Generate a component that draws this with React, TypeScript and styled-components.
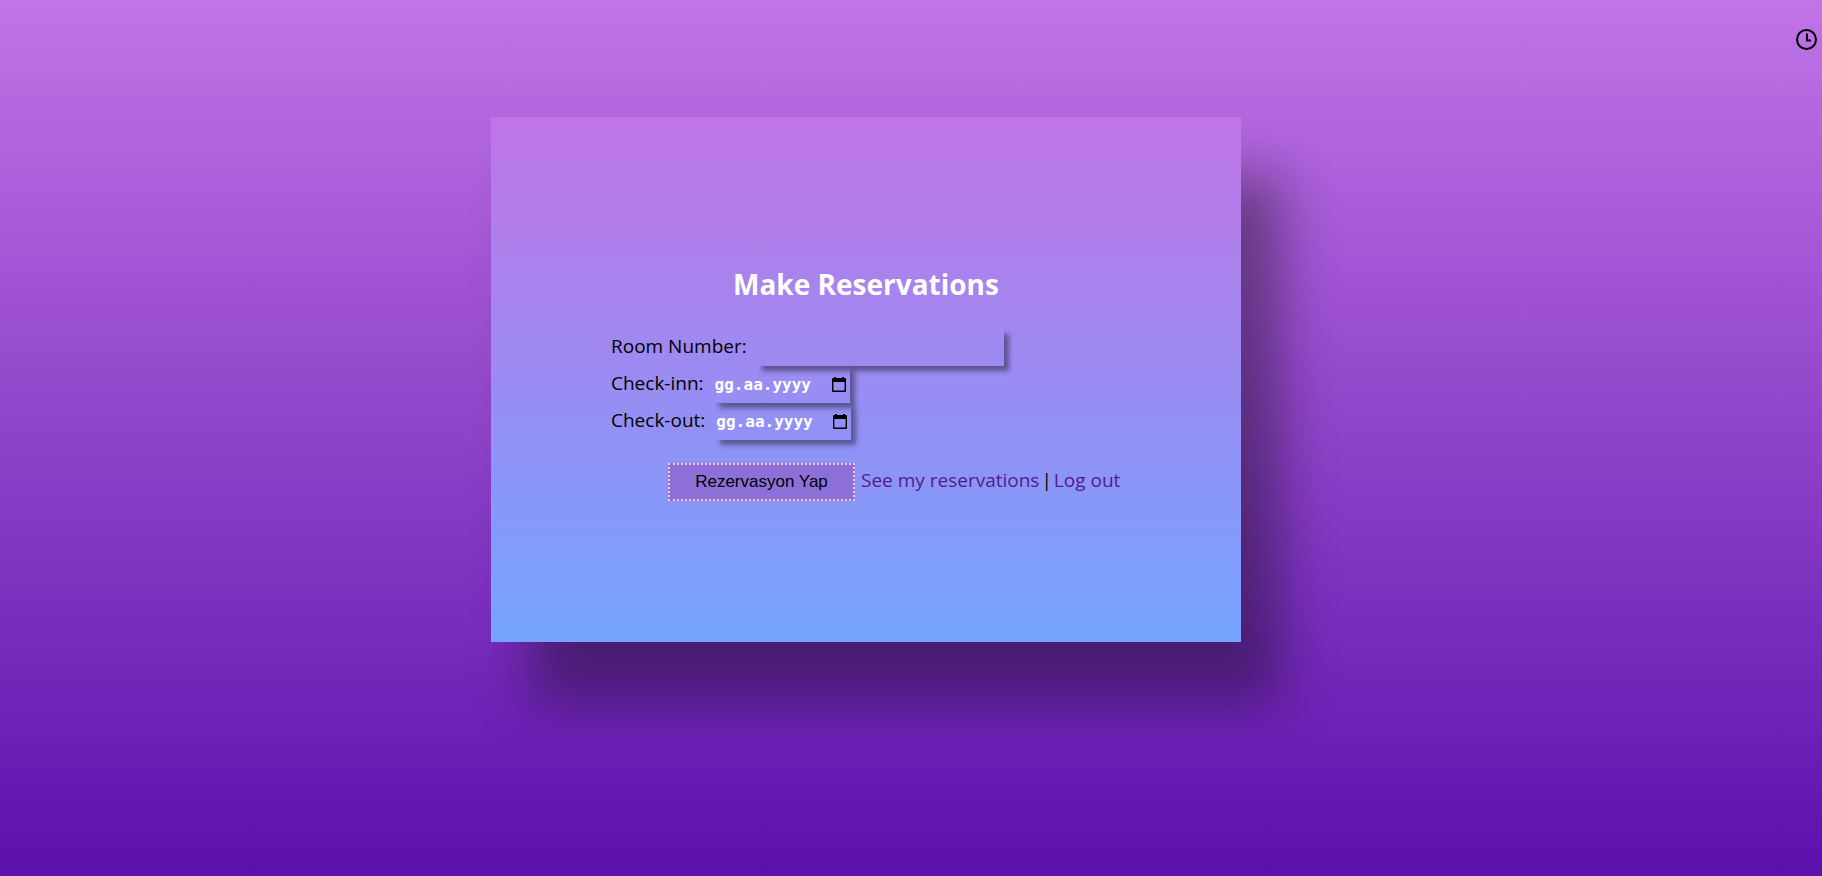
import React from "react";
import styled, { createGlobalStyle } from "styled-components";

const GlobalStyle = createGlobalStyle`
  * { box-sizing: border-box; }
  body {
    margin: 0;
    font-family: "Segoe UI", "Open Sans", "Noto Sans", sans-serif;
    font-size: 19px;
    line-height: 26px;
    color: #000;
  }
`;

const Page = styled.div`
  min-height: 100vh;
  display: flex;
  flex-direction: column;
  background: linear-gradient(#c074e6, #5c10ac);
`;

const TopBar = styled.header`
  display: flex;
  justify-content: flex-end;
  padding: 27px 3px 65px;
`;

const ClockButton = styled.button`
  display: flex;
  padding: 0;
  border: 0;
  background: none;
  color: #000;
`;

const Main = styled.main`
  display: flex;
  justify-content: center;
  padding: 0 90px 0 0;
`;

const Card = styled.section`
  width: 100%;
  max-width: 750px;
  padding: 149px 120px 141px;
  background: linear-gradient(#c074e6, #74a4ff);
  box-shadow: 40px 60px 50px rgba(10, 10, 10, 0.4);
`;

const Title = styled.h1`
  margin: 0 0 27px;
  font-size: 28px;
  line-height: 36px;
  text-align: center;
  color: #fff;
`;

const Field = styled.div`
  display: flex;
  align-items: flex-start;
  gap: 10px;
  height: 37px;
`;

const FieldLabel = styled.label`
  padding-top: 4px;
`;

const Box = styled.div<{ $width: number }>`
  display: flex;
  align-items: center;
  width: ${(p) => p.$width}px;
  height: 37px;
  box-shadow: 5px 5px 5px rgba(0, 0, 0, 0.4);
`;

const TextInput = styled.input`
  flex: 1;
  min-width: 0;
  height: 100%;
  padding: 0 1px;
  border: 0;
  outline: 0;
  background: transparent;
  color: #fff;
  font: bold 16px "DejaVu Sans Mono", monospace;

  &::placeholder {
    color: #fff;
    opacity: 1;
  }
`;

const PickerButton = styled.button`
  display: flex;
  padding: 0 3px 0 0;
  border: 0;
  background: none;
  color: #000;
`;

const Actions = styled.div`
  display: flex;
  align-items: flex-start;
  gap: 6px;
  margin: 23px 0 0 57px;
  white-space: nowrap;
`;

const SubmitButton = styled.button`
  flex: none;
  width: 187px;
  height: 38px;
  padding: 0;
  border: 2px dotted #ffc9d4;
  background: #8c70d8;
  color: #000;
  font: 17px "Liberation Sans", Arial, sans-serif;
`;

const Links = styled.nav`
  display: flex;
  gap: 2px;
  padding-top: 4px;
`;

const NavLink = styled.a`
  color: #551a8b;
  text-decoration: none;
`;

function ClockIcon() {
  return (
    <svg width="25" height="25" viewBox="0 0 25 25" fill="none" stroke="currentColor" strokeWidth="2" aria-hidden="true">
      <circle cx="12.500" cy="12.500" r="9.500" />
      <path d="M13 6.500V13.500H17" />
    </svg>
  );
}

function CalendarIcon() {
  return (
    <svg width="16" height="16" viewBox="0 0 16 16" aria-hidden="true">
      <path
        fill="currentColor"
        fillRule="evenodd"
        d="M3 0h2v1h6V0h2v1h1a1 1 0 0 1 1 1v12a1 1 0 0 1-1 1H2a1 1 0 0 1-1-1V2a1 1 0 0 1 1-1h1zM2.400 5v8.600h11.200V5z"
      />
    </svg>
  );
}

function DateField({ id, label }: { id: string; label: string }) {
  return (
    <Field>
      <FieldLabel htmlFor={id}>{label}</FieldLabel>
      <Box $width={136}>
        <TextInput id={id} type="text" placeholder="gg.aa.yyyy" />
        <PickerButton type="button" aria-label={`${label} calendar`}>
          <CalendarIcon />
        </PickerButton>
      </Box>
    </Field>
  );
}

export default function App() {
  return (
    <Page>
      <GlobalStyle />
      <TopBar>
        <ClockButton type="button" aria-label="Clock">
          <ClockIcon />
        </ClockButton>
      </TopBar>
      <Main>
        <Card>
          <Title>Make Reservations</Title>
          <form onSubmit={(e) => e.preventDefault()}>
            <Field>
              <FieldLabel htmlFor="room">Room Number:</FieldLabel>
              <Box $width={247}>
                <TextInput id="room" type="text" />
              </Box>
            </Field>
            <DateField id="check-in" label="Check-inn:" />
            <DateField id="check-out" label="Check-out:" />
            <Actions>
              <SubmitButton type="submit">Rezervasyon Yap</SubmitButton>
              <Links>
                <NavLink href="#reservations">See my reservations</NavLink>
                <span>|</span>
                <NavLink href="#logout">Log out</NavLink>
              </Links>
            </Actions>
          </form>
        </Card>
      </Main>
    </Page>
  );
}
